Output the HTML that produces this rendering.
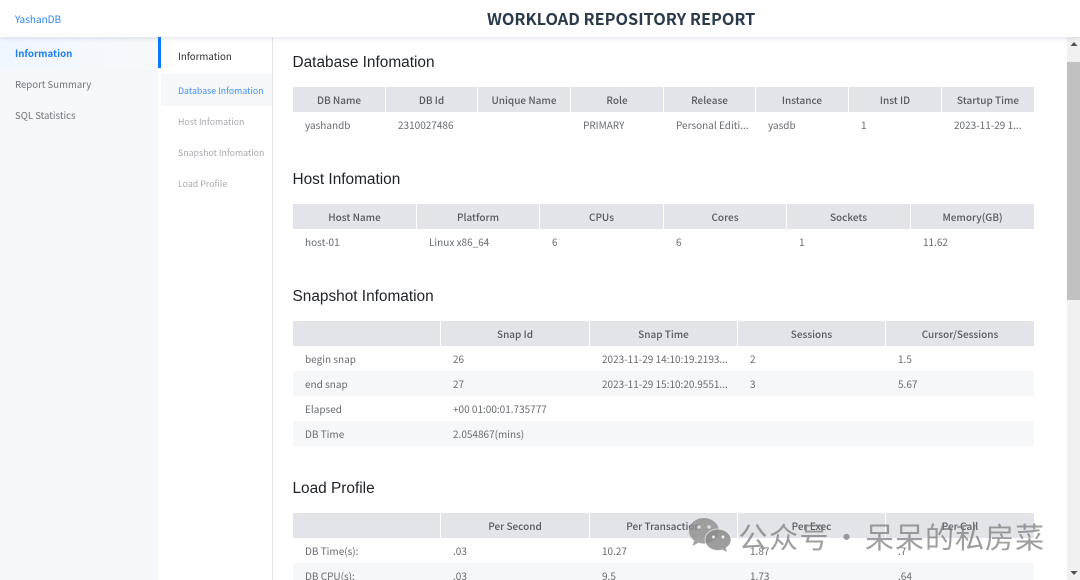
<!DOCTYPE html>
<html><head><meta charset="utf-8">
<style>
*{box-sizing:border-box}
html,body{margin:0;padding:0;width:1080px;height:580px;overflow:hidden;background:#fff}
#root{position:relative;width:1080px;height:580px;overflow:hidden;contain:paint;font-family:"Noto Sans CJK SC","Liberation Sans",sans-serif}
.a{position:absolute;white-space:nowrap}
#hd{position:absolute;left:0;top:0;width:1080px;height:37px;background:#fff;box-shadow:0 1px 5px rgba(90,110,150,.2);z-index:5}
h2{position:absolute;left:292.500px;margin:0;font:400 15.400px/20px "Liberation Sans",sans-serif;color:#1f2328}
.th,.td{position:absolute;font-size:10px;line-height:25px;height:25px;white-space:nowrap;overflow:hidden}
.th{background:#e3e4e9;color:#555a62;font-weight:500;text-align:center;border-right:1px solid #fff}
.td{color:#666a70;padding-left:12px}
.st{position:absolute;left:293px;width:741px;height:25px;background:#f6f7f9}
</style></head><body>
<div id="root">
<div style="position:absolute;left:0;top:37px;width:158px;height:543px;background:#f6f7fb"></div>
<div style="position:absolute;left:0;top:37px;width:158px;height:31px;background:linear-gradient(90deg,#f0f6ff,#f7f9fc)"></div>
<div style="position:absolute;left:158px;top:37px;width:3px;height:31px;background:#0a7aff"></div>
<div style="position:absolute;left:272px;top:37px;width:1px;height:543px;background:#e4e6ea"></div>
<div style="position:absolute;left:161px;top:74px;width:111px;height:32px;background:#f6f7f9"></div>
<div style="position:absolute;left:1067px;top:37px;width:13px;height:543px;background:#f1f1f1"></div>
<div style="position:absolute;left:1067px;top:62px;width:13px;height:238px;background:#c1c1c1"></div>
<svg style="position:absolute;left:1070px;top:41px" width="8" height="6"><path d="M4 1L7.500 5H.5Z" fill="#505050"/></svg>
<svg style="position:absolute;left:1070px;top:570px" width="8" height="6"><path d="M.5 1H7.500L4 5Z" fill="#505050"/></svg>

<div id="hd">
<div class="a" style="left:15px;top:11px;font-size:10px;line-height:15px;color:#2a84f5">YashanDB</div>
<div class="a" style="left:487px;top:7px;font-size:16.300px;line-height:23px;font-weight:700;color:#2b3a4a">WORKLOAD REPOSITORY REPORT</div>
</div>

<div class="a" style="left:15px;top:46px;font-size:9.700px;line-height:14px;font-weight:700;color:#1e7ff0">Information</div>
<div class="a" style="left:15px;top:77px;font-size:9.600px;line-height:14px;color:#70757c">Report Summary</div>
<div class="a" style="left:15px;top:108px;font-size:9.600px;line-height:14px;color:#70757c">SQL Statistics</div>
<div class="a" style="left:178px;top:49px;font-size:9.700px;line-height:14px;color:#2c2f33">Information</div>
<div class="a" style="left:178px;top:84px;font-size:8.800px;line-height:13px;color:#3f8ff0">Database Infomation</div>
<div class="a" style="left:178px;top:115px;font-size:8.800px;line-height:13px;color:#a5a8ad">Host Infomation</div>
<div class="a" style="left:178px;top:146px;font-size:8.800px;line-height:13px;color:#a5a8ad">Snapshot Infomation</div>
<div class="a" style="left:178px;top:177px;font-size:8.800px;line-height:13px;color:#a5a8ad">Load Profile</div>

<h2 style="top:53px">Database Infomation</h2>
<div class="th" style="left:293px;top:87px;width:93px">DB Name</div>
<div class="th" style="left:386px;top:87px;width:92px">DB Id</div>
<div class="th" style="left:478px;top:87px;width:93px">Unique Name</div>
<div class="th" style="left:571px;top:87px;width:93px">Role</div>
<div class="th" style="left:664px;top:87px;width:92px">Release</div>
<div class="th" style="left:756px;top:87px;width:93px">Instance</div>
<div class="th" style="left:849px;top:87px;width:93px">Inst ID</div>
<div class="th" style="left:942px;top:87px;width:92px;border:0">Startup Time</div>
<div class="td" style="left:293px;top:112px">yashandb</div>
<div class="td" style="left:386px;top:112px">2310027486</div>
<div class="td" style="left:571px;top:112px">PRIMARY</div>
<div class="td" style="left:664px;top:112px">Personal Editi...</div>
<div class="td" style="left:756px;top:112px">yasdb</div>
<div class="td" style="left:849px;top:112px">1</div>
<div class="td" style="left:942px;top:112px">2023-11-29 1...</div>

<h2 style="top:170px">Host Infomation</h2>
<div class="th" style="left:293px;top:204px;width:124px">Host Name</div>
<div class="th" style="left:417px;top:204px;width:123px">Platform</div>
<div class="th" style="left:540px;top:204px;width:124px">CPUs</div>
<div class="th" style="left:664px;top:204px;width:123px">Cores</div>
<div class="th" style="left:787px;top:204px;width:124px">Sockets</div>
<div class="th" style="left:911px;top:204px;width:123px;border:0">Memory(GB)</div>
<div class="td" style="left:293px;top:229px">host-01</div>
<div class="td" style="left:417px;top:229px">Linux x86_64</div>
<div class="td" style="left:540px;top:229px">6</div>
<div class="td" style="left:664px;top:229px">6</div>
<div class="td" style="left:787px;top:229px">1</div>
<div class="td" style="left:911px;top:229px">11.62</div>

<h2 style="top:287px">Snapshot Infomation</h2>
<div class="st" style="top:371px"></div>
<div class="st" style="top:421px"></div>
<div class="th" style="left:293px;top:321px;width:148px"></div>
<div class="th" style="left:441px;top:321px;width:149px">Snap Id</div>
<div class="th" style="left:590px;top:321px;width:148px">Snap Time</div>
<div class="th" style="left:738px;top:321px;width:148px">Sessions</div>
<div class="th" style="left:886px;top:321px;width:148px;border:0">Cursor/Sessions</div>
<div class="td" style="left:293px;top:346px">begin snap</div>
<div class="td" style="left:441px;top:346px">26</div>
<div class="td" style="left:590px;top:346px">2023-11-29 14:10:19.2193...</div>
<div class="td" style="left:738px;top:346px">2</div>
<div class="td" style="left:886px;top:346px">1.5</div>
<div class="td" style="left:293px;top:371px">end snap</div>
<div class="td" style="left:441px;top:371px">27</div>
<div class="td" style="left:590px;top:371px">2023-11-29 15:10:20.9551...</div>
<div class="td" style="left:738px;top:371px">3</div>
<div class="td" style="left:886px;top:371px">5.67</div>
<div class="td" style="left:293px;top:396px">Elapsed</div>
<div class="td" style="left:441px;top:396px">+00 01:00:01.735777</div>
<div class="td" style="left:293px;top:421px">DB Time</div>
<div class="td" style="left:441px;top:421px">2.054867(mins)</div>

<h2 style="top:479px">Load Profile</h2>
<div class="st" style="top:563px;height:17px"></div>
<div class="th" style="left:293px;top:513px;width:148px"></div>
<div class="th" style="left:441px;top:513px;width:149px">Per Second</div>
<div class="th" style="left:590px;top:513px;width:148px">Per Transaction</div>
<div class="th" style="left:738px;top:513px;width:148px">Per Exec</div>
<div class="th" style="left:886px;top:513px;width:148px;border:0">Per Call</div>
<div class="td" style="left:293px;top:538px">DB Time(s):</div>
<div class="td" style="left:441px;top:538px">.03</div>
<div class="td" style="left:590px;top:538px">10.27</div>
<div class="td" style="left:738px;top:538px">1.87</div>
<div class="td" style="left:886px;top:538px">.7</div>
<div class="td" style="left:293px;top:563px">DB CPU(s):</div>
<div class="td" style="left:441px;top:563px">.03</div>
<div class="td" style="left:590px;top:563px">9.5</div>
<div class="td" style="left:738px;top:563px">1.73</div>
<div class="td" style="left:886px;top:563px">.64</div>

<svg style="position:absolute;left:688px;top:517px;z-index:6" width="44" height="37" viewBox="0 0 44 37">
<path d="M16 1C7.500 1 1 6.800 1 14c0 4 2 7.200 5.200 9.600L4.500 29l6-3.200c1.800.5 3.600.8 5.500.8 8.500 0 15-5.800 15-12.600S24.500 1 16 1z" fill="#8c8c8c" fill-opacity=".8"/>
<path d="M30 12c-7.200 0-13 4.800-13 10.800S22.800 33.500 30 33.500c1.500 0 3-.2 4.300-.7l5 2.700-1.300-4.500c3.200-2 5-5 5-8.200C43 16.800 37.200 12 30 12z" fill="#8c8c8c" fill-opacity=".85" stroke="#fff" stroke-opacity=".6" stroke-width="1"/>
<circle cx="11" cy="10" r="1.800" fill="#ddd"/><circle cx="21" cy="10" r="1.800" fill="#ddd"/>
<circle cx="25.500" cy="20" r="1.500" fill="#eee"/><circle cx="35" cy="20" r="1.500" fill="#eee"/>
</svg>
<div class="a" style="left:738.500px;top:517px;font-size:29px;line-height:38px;letter-spacing:1.500px;color:rgba(120,120,120,.72);z-index:6">公众号</div>
<div class="a" style="left:832px;top:517px;font-size:29px;line-height:38px;color:rgba(120,120,120,.72);z-index:6">·</div>
<div class="a" style="left:865px;top:517px;font-size:29px;line-height:38px;letter-spacing:1px;color:rgba(120,120,120,.72);z-index:6">呆呆的私房菜</div>
</div>
</body></html>
